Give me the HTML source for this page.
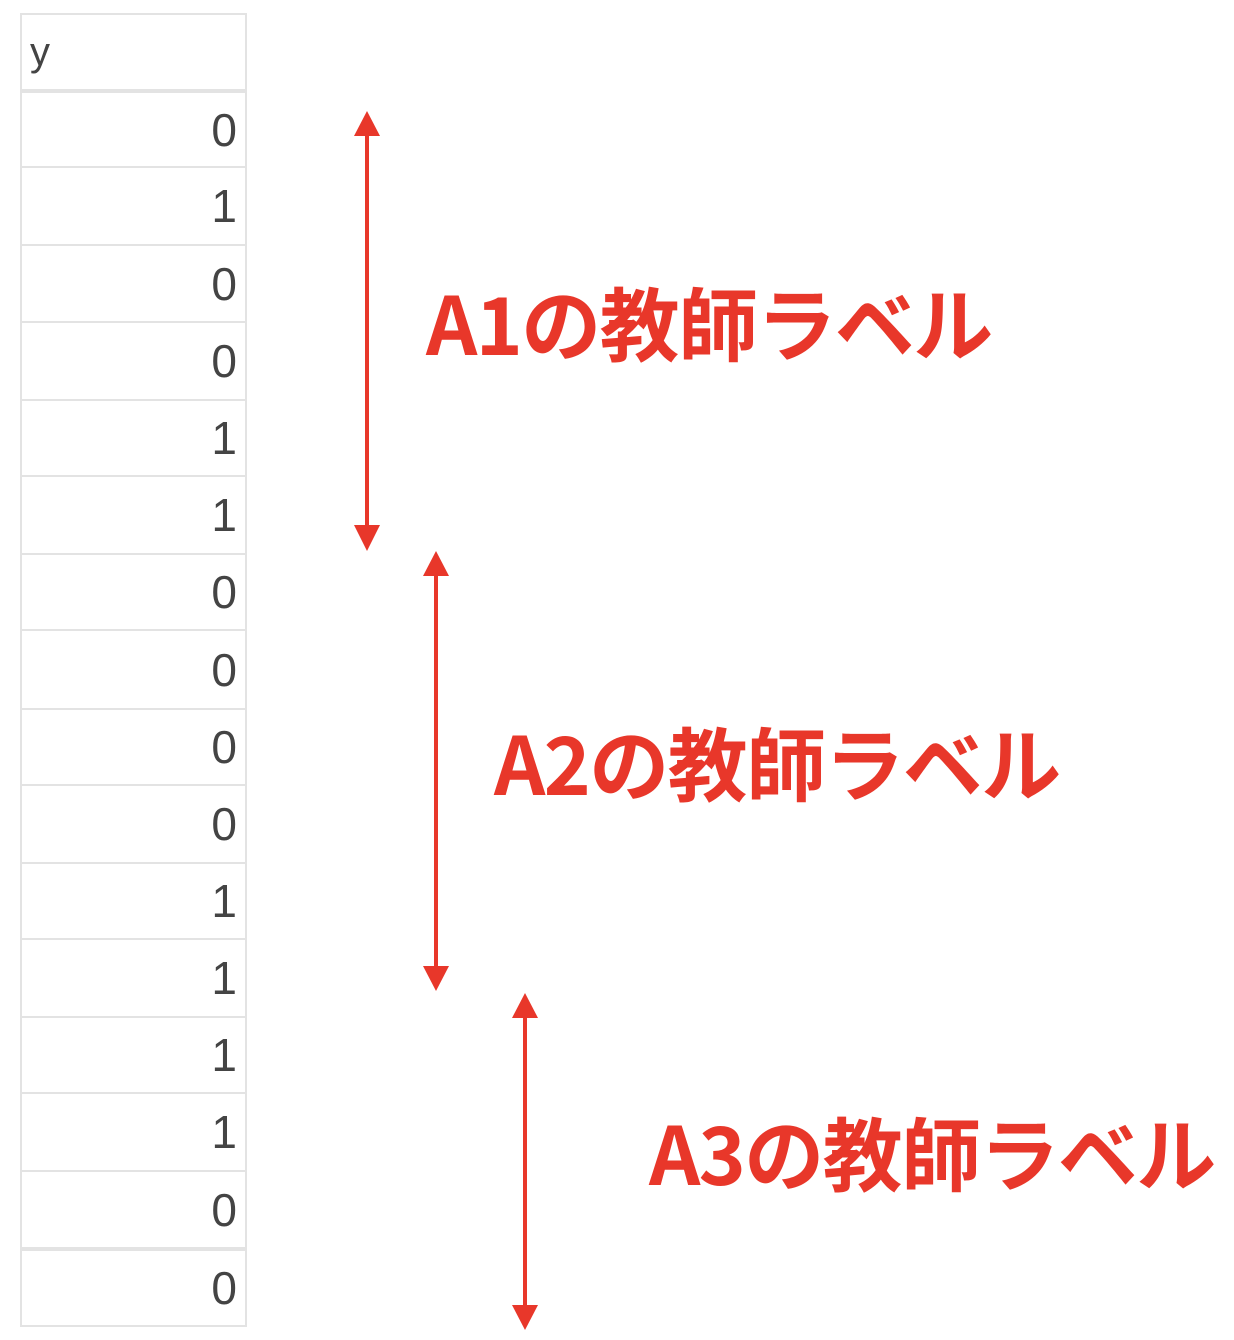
<!DOCTYPE html>
<html><head><meta charset="utf-8"><style>
html,body{margin:0;padding:0;background:#fff;}
body{width:1234px;height:1340px;position:relative;overflow:hidden;}
.r{position:absolute;left:20px;width:227px;box-sizing:border-box;border:2px solid #e3e3e3;border-top:none;
font-family:"Liberation Sans",sans-serif;font-size:46px;color:#444;text-align:right;padding-right:8px;display:flex;align-items:center;justify-content:flex-end;}
.t{position:absolute;font-family:"Noto Sans CJK JP","Liberation Sans",sans-serif;font-weight:bold;font-size:80px;line-height:80px;color:#e8372a;letter-spacing:-1.6px;white-space:nowrap;}
</style></head><body>
<div class="r" style="top:13px;height:78px;border-top:2px solid #e3e3e3;justify-content:flex-start;padding-left:8px;font-size:40px;align-items:center;">y</div>
<div class="r" style="top:91px;height:77px;border-top:2px solid #e3e3e3;">0</div>
<div class="r" style="top:168px;height:78px;">1</div>
<div class="r" style="top:246px;height:77px;">0</div>
<div class="r" style="top:323px;height:78px;">0</div>
<div class="r" style="top:401px;height:76px;">1</div>
<div class="r" style="top:477px;height:78px;">1</div>
<div class="r" style="top:555px;height:76px;">0</div>
<div class="r" style="top:631px;height:79px;">0</div>
<div class="r" style="top:710px;height:76px;">0</div>
<div class="r" style="top:786px;height:78px;">0</div>
<div class="r" style="top:864px;height:76px;">1</div>
<div class="r" style="top:940px;height:78px;">1</div>
<div class="r" style="top:1018px;height:76px;">1</div>
<div class="r" style="top:1094px;height:78px;">1</div>
<div class="r" style="top:1172px;height:77px;">0</div>
<div class="r" style="top:1249px;height:78px;border-top:2px solid #e3e3e3;">0</div>

<svg width="1234" height="1340" style="position:absolute;left:0;top:0" fill="#e8372a" stroke="none">
<rect x="365" y="134" width="4" height="394"/>
<polygon points="367,111 354,136 380,136"/>
<polygon points="367,551 354,525 380,525"/>
<rect x="434" y="573" width="4" height="396"/>
<polygon points="436,551 423,576 449,576"/>
<polygon points="436,991 423,966 449,966"/>
<rect x="523" y="1015" width="4" height="292"/>
<polygon points="525,993 512,1018 538,1018"/>
<polygon points="525,1330 512,1305 538,1305"/>
</svg>

<div class="t" style="left:426px;top:281px;">A1の教師ラベル</div>
<div class="t" style="left:494px;top:721px;">A2の教師ラベル</div>
<div class="t" style="left:649px;top:1111px;">A3の教師ラベル</div>
</body></html>
